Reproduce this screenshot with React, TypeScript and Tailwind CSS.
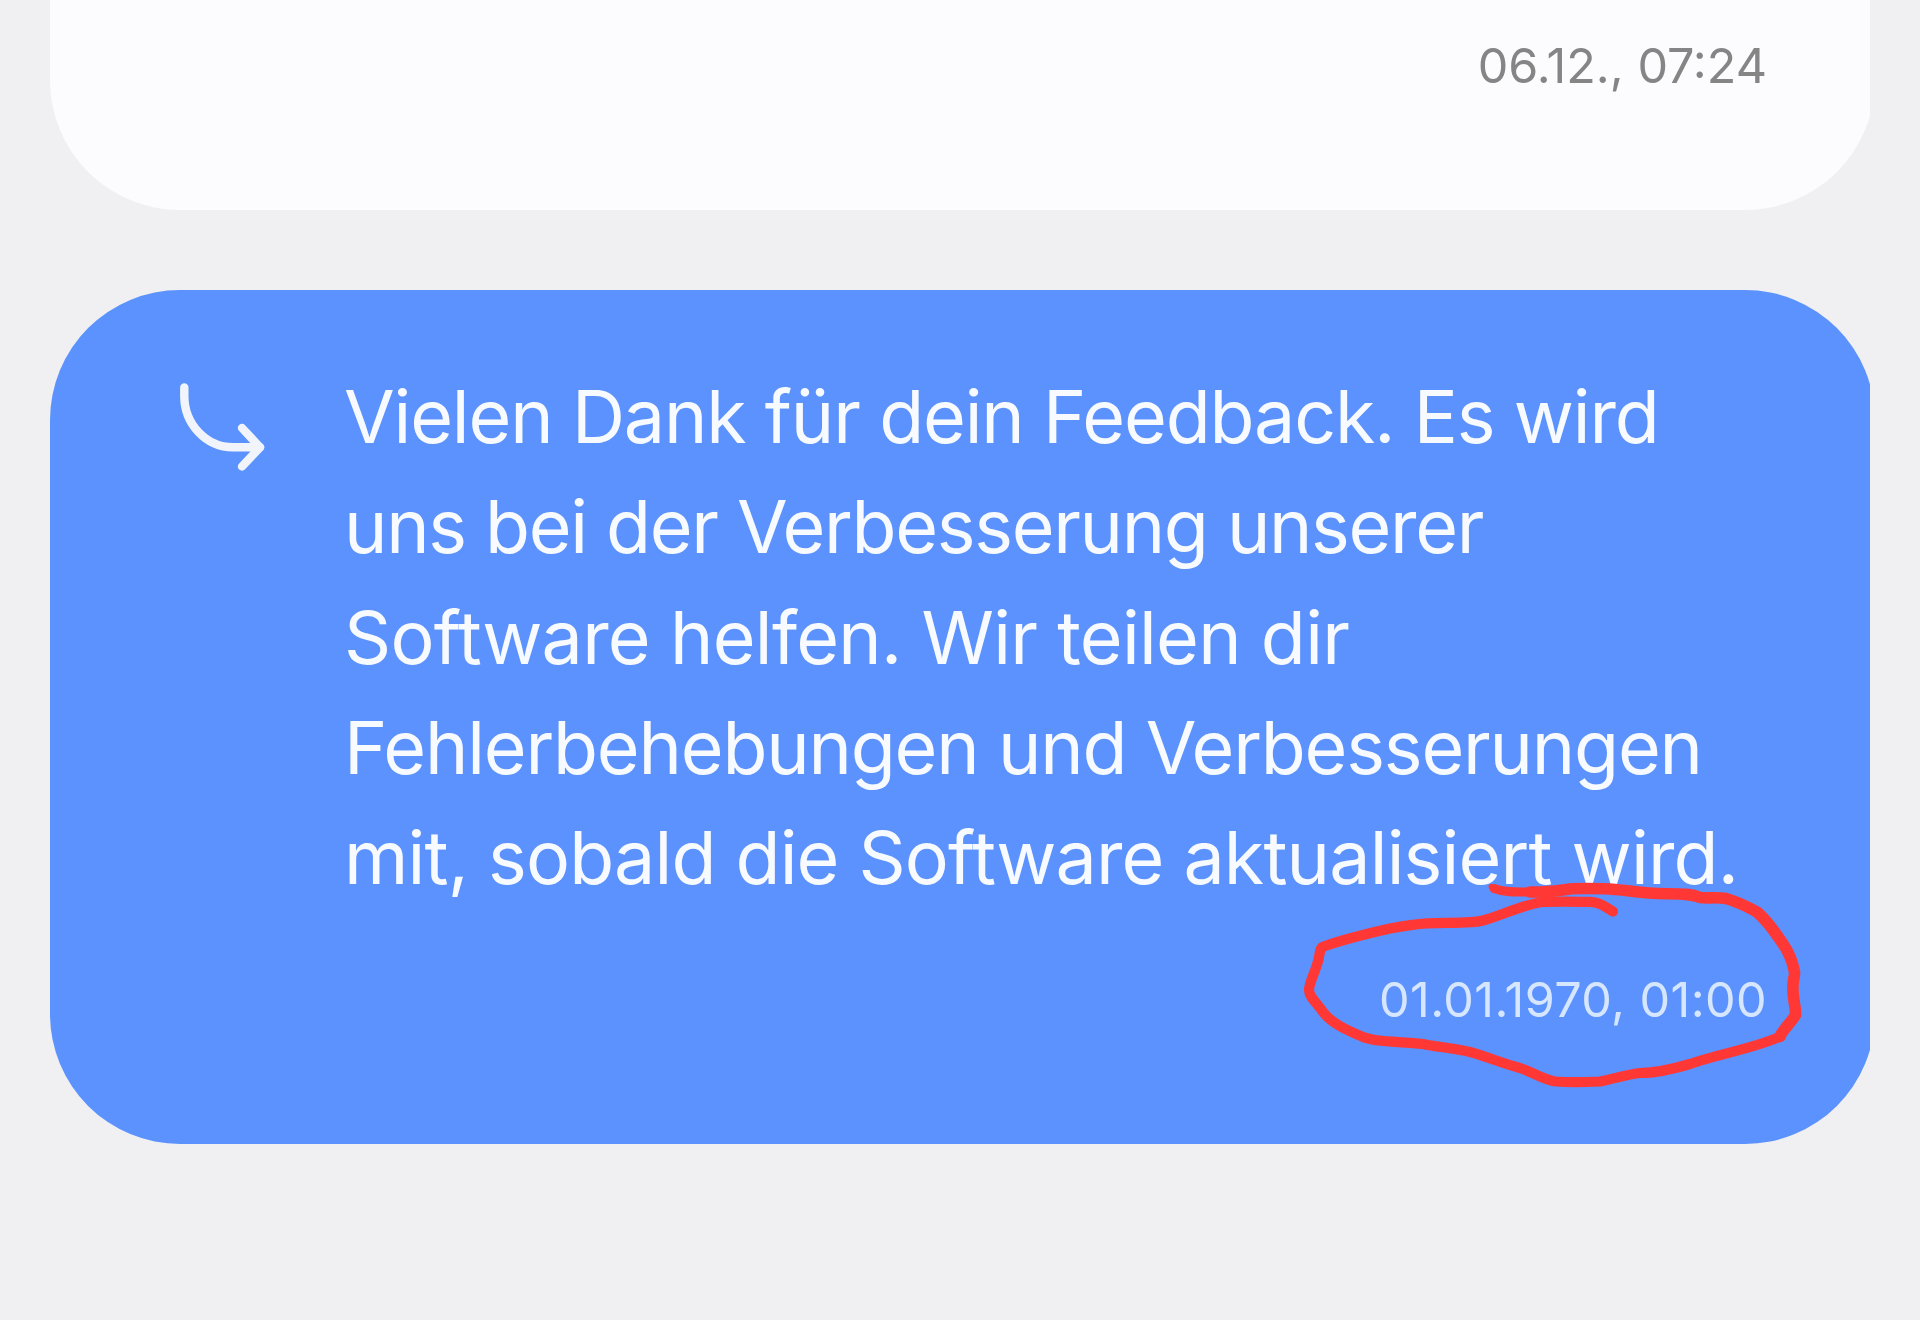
const lines = [
  { text: "Vielen Dank für dein Feedback. Es wird", tracking: "tracking-[-1.17px]" },
  { text: "uns bei der Verbesserung unserer", tracking: "tracking-[-1.33px]" },
  { text: "Software helfen. Wir teilen dir", tracking: "tracking-[-0.72px]" },
  { text: "Fehlerbehebungen und Verbesserungen", tracking: "tracking-[-1.2px]" },
  { text: "mit, sobald die Software aktualisiert wird.", tracking: "tracking-[-0.83px]" },
]

function ReplyArrow() {
  return (
    <svg
      className="mt-[84px] h-[100px] w-[100px] shrink-0"
      viewBox="0 0 100 100"
      fill="none"
      stroke="#f1f5fb"
      strokeWidth="8.4"
      strokeLinecap="round"
      strokeLinejoin="round"
    >
      <path d="M14.3 13.5V22C14.3 50 36 73.3 63 73.3H90" />
      <path d="M72 54L90 73.3L72 92.5" />
    </svg>
  )
}

// Hand-drawn marker around the date
function Marker() {
  return (
    <svg
      className="pointer-events-none absolute left-[1300px] top-[870px] h-[230px] w-[520px]"
      viewBox="1300 870 520 230"
      fill="none"
      stroke="#ff3835"
      strokeLinecap="round"
      strokeLinejoin="round"
    >
      <path
        strokeWidth="10.2"
        d="M1613 911.5C1603 905 1598 902 1590 901.8C1572 901.5 1550 901.5 1543 902C1524 904 1500 916 1483 920.5C1473 923.5 1450 922.5 1427 923.3C1415 924 1403 926 1390 928.5C1370 933 1345 939 1325 946C1318 948 1321 953 1317.5 963C1315 972 1309 983 1309 990C1309 997 1317 1003 1323 1012C1332 1024 1349 1031 1363 1037C1378 1043 1401 1041 1423 1044C1436 1047 1454 1048 1470 1052C1485 1056 1501 1063 1520 1068C1533 1072 1543 1080 1556 1081.5C1570 1082.5 1588 1082 1600 1081.5C1612 1079 1630 1074 1640 1073C1656 1073 1673 1069 1690 1064C1718 1054 1756 1048 1780 1036.5"
      />
      <path
        strokeWidth="11.6"
        d="M1780 1036.5C1783 1029 1791 1023 1795.5 1015C1796 1006 1792 998 1793 985C1793 980 1795 976 1794.5 972C1793 964 1790 955 1785 947C1778 937 1770 923 1757 912C1748 907 1735 901 1726 898.5C1717 897 1708 898.5 1700 897.5C1690 893 1675 894 1658 893.5C1640 893 1622 889.5 1605 888.8C1595 888.5 1583 888.3 1572 888.8C1560 890 1548 892.5 1530 892"
      />
      <path strokeWidth="9" d="M1532 892C1518 892 1506 893 1494 888.5" />
      <path strokeWidth="5" d="M1500 889L1491 886.5" />
    </svg>
  )
}

export default function App() {
  return (
    <div className="relative h-[1320px] w-[1920px] overflow-hidden bg-[#f0f0f2] font-['Inter','Liberation_Sans',sans-serif]">
      <main className="ml-[50px] flex w-[1820px] flex-col gap-20 overflow-hidden">
        <section className="flex h-[210px] w-[1825px] justify-end rounded-b-[130px] bg-[#fcfcfe] pr-[108px] pt-9">
          <time className="text-[48.5px] leading-[60px] text-[#858585]">06.12., 07:24</time>
        </section>

        <section className="flex h-[854px] w-[1825px] rounded-[130px] bg-[#5c92fd] pl-[120px] pr-[108px]">
          <ReplyArrow />
          <div className="ml-[74px] flex min-w-0 flex-1 flex-col pt-[72px]">
            <div className="text-[73.5px] leading-[110.25px] text-[#f7faff]">
              {lines.map((line) => (
                <p key={line.text} className={`whitespace-nowrap ${line.tracking}`}>
                  {line.text}
                </p>
              ))}
            </div>
            <time className="mt-[57px] self-end text-[48.5px] leading-[60px] tracking-[0.4px] text-[#d6e6ff]">
              01.01.1970, 01:00
            </time>
          </div>
        </section>
      </main>

      <Marker />
    </div>
  )
}
